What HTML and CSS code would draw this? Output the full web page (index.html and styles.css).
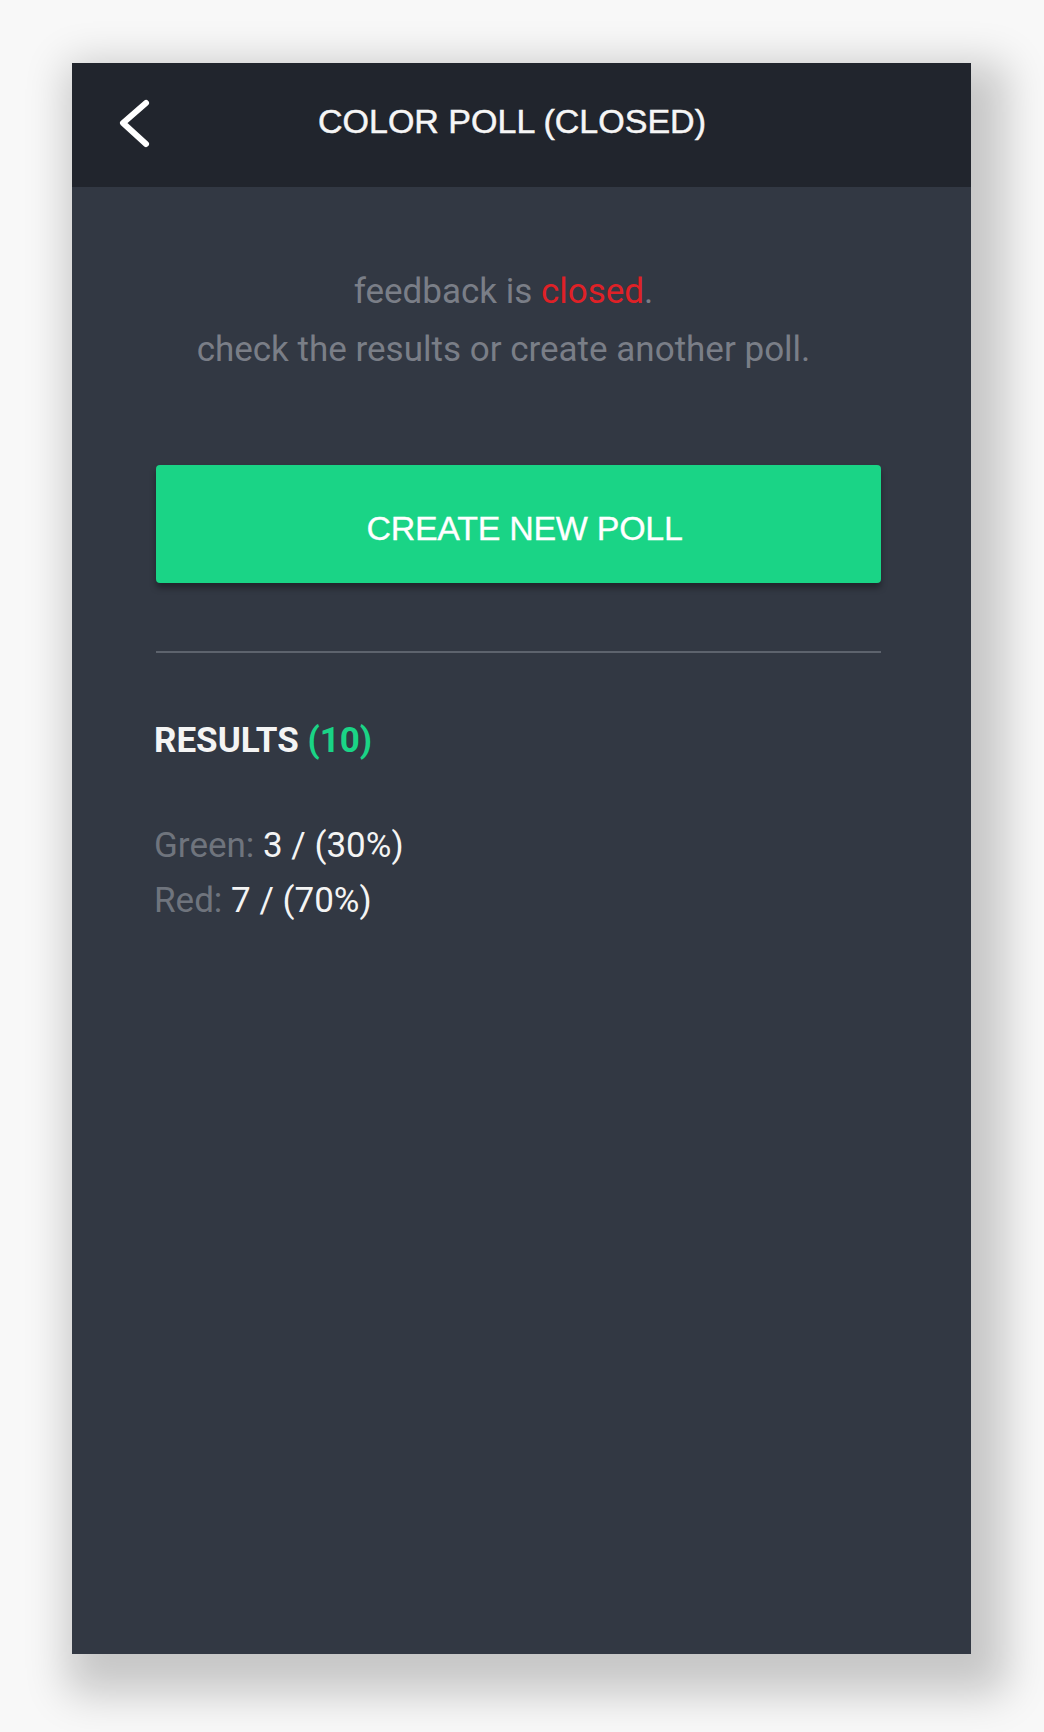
FILE: index.html
```html
<!DOCTYPE html>
<html>
<head>
<meta charset="utf-8">
<link rel="stylesheet" href="styles.css">
</head>
<body>
<div class="phone">
  <header class="topbar">
    <svg class="back" width="44" height="60" viewBox="0 0 44 60">
      <polyline points="34,11 11,31 34,52" fill="none" stroke="#ffffff" stroke-width="6" stroke-linecap="round" stroke-linejoin="round"/>
    </svg>
    <h1 class="title">COLOR POLL (CLOSED)</h1>
    <span class="spacer"></span>
  </header>
  <main class="content">
    <p class="notice">feedback is <span class="red">closed</span>.<br>check the results or create another poll.</p>
    <button class="create">CREATE NEW POLL</button>
    <hr class="divider">
    <h2 class="results">RESULTS <span class="count">(10)</span></h2>
    <ul class="list">
      <li><span class="label">Green:</span> 3 / (30%)</li>
      <li><span class="label">Red:</span> 7 / (70%)</li>
    </ul>
  </main>
</div>
</body>
</html>
```

FILE: styles.css
```css
html, body {
  margin: 0;
  padding: 0;
}
body {
  background: #f8f8f8;
  height: 1732px;
  overflow: hidden;
}
.phone {
  margin: 63px 0 0 72px;
  width: 899px;
  height: 1591px;
  background: #323843;
  box-shadow: 15px 20px 40px 20px rgba(0, 0, 0, 0.2);
  display: flex;
  flex-direction: column;
}
.topbar {
  height: 124px;
  background: #21252d;
  display: flex;
  align-items: center;
  padding-left: 40px;
  padding-bottom: 6px;
  box-sizing: border-box;
}
.back {
  display: block;
  flex: none;
}
.title {
  flex: 1;
  margin: 0;
  text-align: center;
  font-family: "Liberation Sans", Arial, sans-serif;
  font-weight: normal;
  font-size: 34px;
  color: #f6f6f6;
  -webkit-text-stroke: 0.5px #f6f6f6;
  padding-right: 19px;
  padding-bottom: 2px;
}
.spacer {
  width: 84px;
  flex: none;
}
.content {
  padding: 76px 90px 0 84px;
  display: flex;
  flex-direction: column;
}
.notice {
  margin: 0;
  font-family: Roboto, "Liberation Sans", sans-serif;
  font-size: 35px;
  line-height: 58px;
  color: #7a7e87;
  text-align: center;
  padding-right: 30px;
}
.red {
  color: #df2127;
}
.create {
  margin-top: 86px;
  height: 118px;
  border: none;
  border-radius: 4px;
  background: #1ad486;
  color: #ffffff;
  font-family: "Liberation Sans", Arial, sans-serif;
  font-size: 34px;
  letter-spacing: -0.3px;
  -webkit-text-stroke: 0.3px #ffffff;
  box-shadow: 0 5px 6px rgba(0, 0, 0, 0.35);
  padding: 8px 0 0 12px;
}
.divider {
  margin: 68px 0 0;
  border: none;
  height: 2px;
  background: #5d636d;
}
.results {
  margin: 68px 0 0 -2px;
  font-family: Roboto, "Liberation Sans", sans-serif;
  font-weight: bold;
  font-size: 35px;
  line-height: 40px;
  color: #f4f4f4;
}
.count {
  color: #1ad486;
}
.list {
  list-style: none;
  margin: 57px 0 0 -2px;
  padding: 0;
  font-family: Roboto, "Liberation Sans", sans-serif;
  font-size: 35px;
  line-height: 55px;
  color: #f4f4f4;
}
.label {
  color: #6f747d;
}
```
